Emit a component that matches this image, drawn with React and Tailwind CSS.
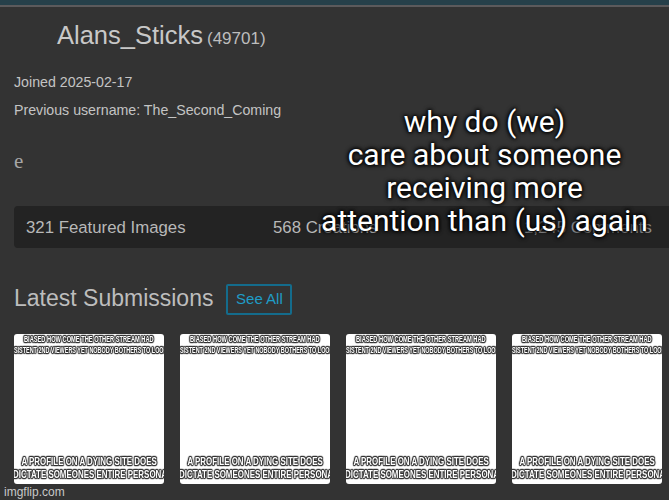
const thumbs = [1, 2, 3, 4];

const MemeLine = ({ text, className, spanClass }) => (
  <div className={`flex overflow-hidden whitespace-nowrap ${className}`}>
    <span className={`inline-block shrink-0 font-bold text-white [font-family:'Liberation_Sans',sans-serif] blur-[0.4px] [text-shadow:0_0_2px_#333,0_0_2px_#333,1px_0_1px_#333,-1px_0_1px_#333,0_1px_1px_#333,0_-1px_1px_#333,1px_1px_1px_#555,-1px_-1px_1px_#555,1px_-1px_1px_#555,-1px_1px_1px_#555] ${spanClass}`}>
      {text}
    </span>
  </div>
);

const Thumb = () => (
  <div className="flex h-[150px] w-[150px] flex-col overflow-hidden rounded-[3px] bg-white">
    <MemeLine
      text="BIASED HOW COME THE OTHER STREAM HAD"
      className="h-[11px] justify-center text-[8.5px] leading-[11px]"
      spanClass="scale-x-[0.67]"
    />
    <MemeLine
      text="CONSISTENT 2ND VIEWERS YET NOBODY BOTHERS TO LOOK AT"
      className="h-[10px] justify-center text-[8.5px] leading-[10px]"
      spanClass="scale-x-[0.64]"
    />
    <div className="flex-1" />
    <MemeLine
      text="A PROFILE ON A DYING SITE DOES"
      className="h-[13px] justify-center text-[11.5px] leading-[13px]"
      spanClass="scale-x-[0.69]"
    />
    <MemeLine
      text="DICTATE SOMEONES ENTIRE PERSONALITY"
      className="mb-[3px] h-[13px] justify-start text-[11.5px] leading-[13px]"
      spanClass="ml-[-1px] origin-left scale-x-[0.69]"
    />
  </div>
);

export default function App() {
  return (
    <div className="relative h-[500px] w-[669px] overflow-hidden bg-[#333333] text-[#c4c4c4] [font-family:'Liberation_Sans',sans-serif]">
      <div className="h-[5px] bg-[#26404a]" />
      <div className="h-[2px] bg-[#5c5a5c]" />

      <div className="pl-[14px]">
        <div className="ml-[43px] mt-[12px] flex h-[32px] items-baseline gap-[4px]">
          <span className="text-[25.5px] leading-[32px] text-[#c8c8c8]">Alans_Sticks</span>
          <span className="text-[17px] text-[#bdbdbd]">(49701)</span>
        </div>

        <p className="mt-[22px] text-[14.2px] leading-[18px]">Joined 2025-02-17</p>
        <p className="mt-[10px] text-[14.2px] leading-[18px]">Previous username: The_Second_Coming</p>
        <p className="mt-[30px] text-[21px] leading-[24px] text-[#a6a6a6] [font-family:'Liberation_Serif',serif]">e</p>

        <div className="mt-[33px] flex h-[42px] items-center rounded-l-[4px] bg-[#232323] pl-[12px] pt-[1px] text-[16.8px] text-[#b8b8b8]">
          <span className="w-[247px]">321 Featured Images</span>
          <span className="w-[251px]">568 Creations</span>
          <span className="text-[#8f8f8f]">1,245 Comments</span>
        </div>

        <div className="mt-[35px] flex items-center">
          <h2 className="pb-[2px] text-[23px] leading-[31px] text-[#bdbdbd]">Latest Submissions</h2>
          <button className="ml-[13px] h-[31px] w-[66px] rounded-[2px] border-2 border-[#146c8c] text-[15px] text-[#1f9cc6]">
            See All
          </button>
        </div>

        <div className="mt-[18px] flex gap-[16px]">
          {thumbs.map((id) => (
            <Thumb key={id} />
          ))}
        </div>
      </div>

      <div className="absolute bottom-[1px] left-[4px] text-[12px] leading-[14px] text-[#c8c8c8]">imgflip.com</div>

      <div className="absolute left-[300px] top-[105px] w-[369px] text-center text-[30px] leading-[33px] text-white [font-family:Roboto,sans-serif] [text-shadow:0_0_3px_#000,0_0_4px_#000,0_0_5px_#000]">
        why do (we)
        <br />
        care about someone
        <br />
        receiving more
        <br />
        attention than (us) again
      </div>
    </div>
  );
}
